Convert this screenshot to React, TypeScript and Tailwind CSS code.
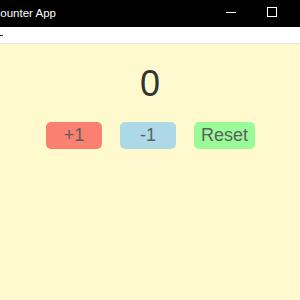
export default function App() {
  return (
    <div className="flex h-[300px] w-[300px] flex-col overflow-hidden bg-[#fffacd] font-['Liberation_Sans',Arial,sans-serif]">
      {/* window title bar */}
      <div className="relative flex h-[27px] shrink-0 items-center bg-black text-white">
        <span className="ml-[-8px] whitespace-nowrap font-['Liberation_Sans',Arial,sans-serif] text-[11.5px] leading-none">
          Counter App
        </span>
        <span className="absolute left-[226px] top-[12px] h-px w-[10px] bg-white" />
        <span className="absolute left-[267px] top-[7px] h-[10px] w-[10px] border border-white" />
      </div>

      {/* menu strip */}
      <div className="relative h-[17px] shrink-0 border-b border-[#e6e6e6] bg-white">
        <span className="absolute left-0 top-[8px] h-px w-[3px] bg-[#222]" />
      </div>

      <div className="flex flex-col items-center">
        <div className="mt-[19px] text-[36px] leading-[42px] text-[#333]">0</div>
        <div className="mt-[17px] ml-[1px] flex gap-[18px] text-[18px] text-[#5e5e5e]">
          <button className="h-[27px] w-[56px] rounded-[5px] bg-[#fa8072] leading-[27px]">+1</button>
          <button className="h-[27px] w-[56px] rounded-[5px] bg-[#add8e6] leading-[27px]">-1</button>
          <button className="h-[27px] rounded-[5px] bg-[#98fb98] px-[7px] leading-[27px]">Reset</button>
        </div>
      </div>
    </div>
  )
}
